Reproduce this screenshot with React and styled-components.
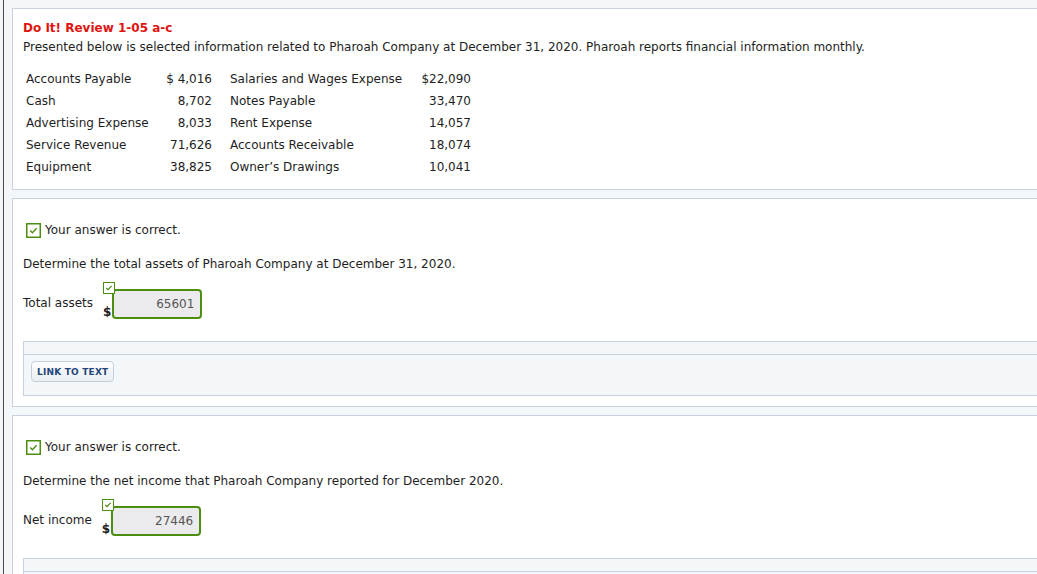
import React from 'react';
import styled, { createGlobalStyle } from 'styled-components';

const GlobalStyle = createGlobalStyle`
  html, body {
    margin: 0;
    padding: 0;
    background: #f4f7fa;
  }
  body {
    font-family: Verdana, "DejaVu Sans", sans-serif;
    font-size: 12px;
    color: #1e1e1e;
  }
`;

const Page = styled.div`
  margin-left: 3px;
  border-left: 1px solid #4a4a4a;
  min-height: 574px;
  max-height: 574px;
  box-sizing: border-box;
  padding: 8px 0 0 8px;
  overflow: hidden;
  background: #f4f7fa;
`;

const Card = styled.section`
  background: #fff;
  border: 1px solid #c8d1dd;
  margin-right: -20px;
  margin-bottom: 8px;
  padding: ${p => p.$pad || '11px 10px 11px'};
`;

const Title = styled.h1`
  margin: 0;
  font-size: 12px;
  line-height: 16px;
  font-weight: bold;
  color: #e0140f;
`;

const Para = styled.p`
  margin: ${p => p.$m || '0'};
  line-height: 16px;
`;

const DataGrid = styled.div`
  display: grid;
  grid-template-columns: 124px 62px 200px 59px;
  margin-top: 13px;
  margin-left: 3px;
`;

const Cell = styled.div`
  height: 22px;
  line-height: 22px;
  white-space: nowrap;
  text-align: ${p => (p.$num ? 'right' : 'left')};
  padding-left: ${p => (p.$second ? '18px' : '0')};
`;

const Correct = styled.div`
  display: flex;
  align-items: center;
  gap: 4px;
  margin: 23px 0 0 3px;
  line-height: 16px;
`;

const AnswerRow = styled.div`
  display: flex;
  align-items: center;
  margin-top: 10px;
`;

const AnswerLabel = styled.span`
  margin-top: 5px;
  margin-right: 10px;
`;

const AnswerGroup = styled.div`
  position: relative;
  display: flex;
  align-items: flex-end;
  padding-top: 7px;
`;

const Dollar = styled.span`
  font-weight: bold;
  font-size: 12px;
  line-height: 12px;
  margin-right: 1px;
  margin-bottom: 1px;
`;

const SmallCheck = styled.span`
  position: absolute;
  left: 0;
  top: 0;
  display: block;
  width: 12px;
  height: 12px;
`;

const Field = styled.div`
  box-sizing: border-box;
  width: 90px;
  height: 30px;
  border: 2px solid #4c8e12;
  border-radius: 4px;
  background: #ebebed;
  color: #555;
  text-align: right;
  line-height: 26px;
  padding-right: 6px;
`;

const Panel = styled.div`
  margin-top: 22px;
  margin-right: -20px;
  border: 1px solid #c8d1dd;
  background: #f4f7fa;
`;

const PanelHead = styled.div`
  height: 12px;
  border-bottom: 1px solid #c8d1dd;
`;

const PanelBody = styled.div`
  padding: 6px 7px 13px;
`;

const LinkButton = styled.button`
  display: block;
  box-sizing: border-box;
  height: 21px;
  padding: 0 5px;
  border: 1px solid #c5cfdb;
  border-radius: 4px;
  background: linear-gradient(#fcfdfe, #eaeff4);
  color: #23467a;
  font-family: Verdana, "DejaVu Sans", sans-serif;
  font-size: 9px;
  font-weight: bold;
  letter-spacing: 0.2px;
  cursor: pointer;
`;

const CheckBox = ({ size = 15 }) => (
  <svg width={size} height={size} viewBox="0 0 15 15">
    <rect x="0.75" y="0.75" width="13.5" height="13.5" fill="#fff" stroke="#4c8e12" strokeWidth="1.5" />
    <path d="M4.2 7.6 L6.4 9.7 L10.6 5.2" fill="none" stroke="#4c8e12" strokeWidth="1.4" />
  </svg>
);

const MiniCheck = () => (
  <SmallCheck>
    <svg width="12" height="12" viewBox="0 0 12 12">
      <rect x="0.5" y="0.5" width="11" height="11" fill="#fff" stroke="#4c8e12" strokeWidth="1" />
      <path d="M3.2 6 L5 7.6 L8.6 3.9" fill="none" stroke="#4c8e12" strokeWidth="1.2" />
    </svg>
  </SmallCheck>
);

const rows = [
  ['Accounts Payable', '$ 4,016', 'Salaries and Wages Expense', '$22,090'],
  ['Cash', '8,702', 'Notes Payable', '33,470'],
  ['Advertising Expense', '8,033', 'Rent Expense', '14,057'],
  ['Service Revenue', '71,626', 'Accounts Receivable', '18,074'],
  ['Equipment', '38,825', "Owner’s Drawings", '10,041'],
];

function AnswerCard({ question, label, value }) {
  return (
    <Card $pad="0 10px 10px">
      <Correct>
        <CheckBox />
        <span>Your answer is correct.</span>
      </Correct>
      <Para $m="18px 0 0">{question}</Para>
      <AnswerRow>
        <AnswerLabel>{label}</AnswerLabel>
        <AnswerGroup>
          <MiniCheck />
          <Dollar>$</Dollar>
          <Field>{value}</Field>
        </AnswerGroup>
      </AnswerRow>
      <Panel>
        <PanelHead />
        <PanelBody>
          <LinkButton>LINK TO TEXT</LinkButton>
        </PanelBody>
      </Panel>
    </Card>
  );
}

export default function App() {
  return (
    <>
      <GlobalStyle />
      <Page>
        <Card>
          <Title>Do It! Review 1-05 a-c</Title>
          <Para $m="3px 0 0">
            Presented below is selected information related to Pharoah Company at December 31, 2020. Pharoah reports financial information monthly.
          </Para>
          <DataGrid>
            {rows.map(r => (
              <React.Fragment key={r[0]}>
                <Cell>{r[0]}</Cell>
                <Cell $num>{r[1]}</Cell>
                <Cell $second>{r[2]}</Cell>
                <Cell $num>{r[3]}</Cell>
              </React.Fragment>
            ))}
          </DataGrid>
        </Card>
        <AnswerCard
          question="Determine the total assets of Pharoah Company at December 31, 2020."
          label="Total assets"
          value="65601"
        />
        <AnswerCard
          question="Determine the net income that Pharoah Company reported for December 2020."
          label="Net income"
          value="27446"
        />
      </Page>
    </>
  );
}
